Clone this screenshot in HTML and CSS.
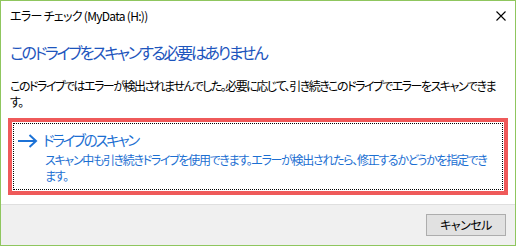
FILE: index.html
```html
<!DOCTYPE html>
<html lang="ja">
<head>
<meta charset="utf-8">
<title>エラー チェック</title>
<link rel="stylesheet" href="styles.css">
</head>
<body>
<div class="window">
  <div class="titlebar">
    <span class="title">エラー チェック (MyData (H:))</span>
    <svg class="close" width="10" height="10" viewBox="0 0 10 10"><path d="M0.5 0.5 L9.5 9.5 M9.5 0.5 L0.5 9.5" stroke="#000" stroke-width="1.1" fill="none"/></svg>
  </div>
  <div class="content">
    <h1 class="heading">このドライブをスキャンする必要はありません</h1>
    <p class="message">このドライブではエラーが検出されませんでした。必要に応じて、引き続きこのドライブでエラーをスキャンできま<br>す。</p>
    <div class="highlight">
      <div class="cmdlink">
        <svg class="arrow" width="20" height="14" viewBox="0 0 20 14"><path d="M0 7 H18 M11.5 1 L18 7 L11.5 13" stroke="#1c72d6" stroke-width="2" fill="none"/></svg>
        <div class="cmdtext">
          <div class="cmdtitle">ドライブのスキャン</div>
          <div class="cmddesc">スキャン中も引き続きドライブを使用できます。エラーが検出されたら、修正するかどうかを指定でき<br>ます。</div>
        </div>
      </div>
    </div>
  </div>
  <div class="footer">
    <button class="btn">キャンセル</button>
  </div>
</div>
</body>
</html>
```

FILE: styles.css
```css
html, body {
  margin: 0;
  padding: 0;
  background: #fff;
}
.window {
  width: 516px;
  height: 246px;
  box-sizing: border-box;
  border: 1px solid #8fc65e;
  background: #fff;
  display: flex;
  flex-direction: column;
  font-family: "Noto Sans CJK JP", "Noto Sans", sans-serif;
  font-feature-settings: "palt";
  color: #000;
}
.titlebar {
  height: 30px;
  flex: none;
  display: flex;
  align-items: center;
  justify-content: space-between;
  padding: 0 9px 0 9px;
}
.title {
  font-size: 12px;
  letter-spacing: -0.7px;
  line-height: 16px;
}
.close {
  display: block;
}
.content {
  flex: 1;
  padding: 11px 0 0 9px;
}
.heading {
  margin: 0;
  font-size: 16px;
  font-weight: normal;
  line-height: 20px;
  color: #1d55bd;
  letter-spacing: -2.35px;
  white-space: nowrap;
}
.message {
  margin: 16px 0 0 0;
  font-size: 12px;
  line-height: 16px;
  letter-spacing: -1.5px;
  white-space: nowrap;
}
.highlight {
  margin: 8px 0 0 -2px;
  width: 500px;
  height: 77px;
  box-sizing: border-box;
  border: 4px solid #ef5a5a;
  padding: 1px;
}
.cmdlink {
  height: 100%;
  box-sizing: border-box;
  border: 1px dotted #000;
  display: flex;
  align-items: flex-start;
  padding: 6px 0 0 4px;
  color: #1c6fd2;
}
.arrow {
  flex: none;
  margin-top: 4px;
}
.cmdtext {
  margin-left: 5px;
}
.cmdtitle {
  font-size: 14.5px;
  line-height: 20px;
  letter-spacing: -2.2px;
  white-space: nowrap;
}
.cmddesc {
  margin: 2px 0 0 2px;
  font-size: 12px;
  line-height: 16px;
  letter-spacing: -1.31px;
  white-space: nowrap;
}
.footer {
  flex: none;
  height: 41px;
  box-sizing: border-box;
  border-top: 1px solid #dfdfdf;
  background: #f0f0f0;
  display: flex;
  justify-content: flex-end;
  align-items: flex-start;
  padding: 9px 9px 0 0;
}
.btn {
  width: 80px;
  height: 22px;
  box-sizing: border-box;
  border: 1px solid #adadad;
  background: #e1e1e1;
  font-family: "Noto Sans CJK JP", sans-serif;
  font-feature-settings: "palt";
  font-size: 12px;
  letter-spacing: -0.5px;
  color: #000;
  padding: 0;
  line-height: 18px;
}
```
